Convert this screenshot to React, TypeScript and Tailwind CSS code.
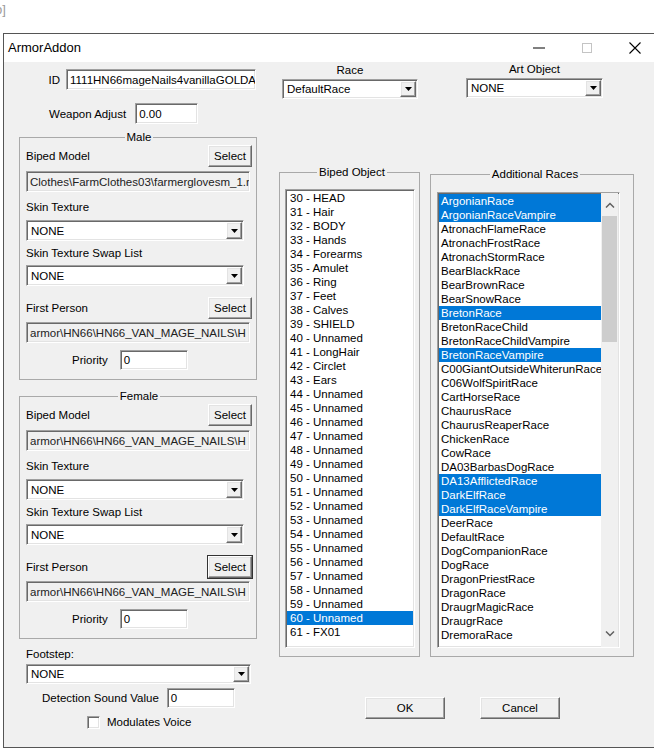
import React from 'react';

const sunken =
  'border border-t-[#a0a0a0] border-l-[#a0a0a0] border-r-white border-b-white shadow-[inset_1px_1px_0_#696969,inset_-1px_-1px_0_#e3e3e3]';
const raised =
  'border border-t-white border-l-white border-r-[#696969] border-b-[#696969] shadow-[inset_-1px_-1px_0_#a0a0a0,inset_1px_1px_0_#e3e3e3] bg-[#f0f0f0]';

const bipedSlots = [
  '30 - HEAD', '31 - Hair', '32 - BODY', '33 - Hands', '34 - Forearms', '35 - Amulet', '36 - Ring', '37 - Feet',
  '38 - Calves', '39 - SHIELD', '40 - Unnamed', '41 - LongHair', '42 - Circlet', '43 - Ears', '44 - Unnamed',
  '45 - Unnamed', '46 - Unnamed', '47 - Unnamed', '48 - Unnamed', '49 - Unnamed', '50 - Unnamed', '51 - Unnamed',
  '52 - Unnamed', '53 - Unnamed', '54 - Unnamed', '55 - Unnamed', '56 - Unnamed', '57 - Unnamed', '58 - Unnamed',
  '59 - Unnamed', '60 - Unnamed', '61 - FX01',
];

const races = [
  'ArgonianRace', 'ArgonianRaceVampire', 'AtronachFlameRace', 'AtronachFrostRace', 'AtronachStormRace',
  'BearBlackRace', 'BearBrownRace', 'BearSnowRace', 'BretonRace', 'BretonRaceChild', 'BretonRaceChildVampire',
  'BretonRaceVampire', 'C00GiantOutsideWhiterunRace', 'C06WolfSpiritRace', 'CartHorseRace', 'ChaurusRace',
  'ChaurusReaperRace', 'ChickenRace', 'CowRace', 'DA03BarbasDogRace', 'DA13AfflictedRace', 'DarkElfRace',
  'DarkElfRaceVampire', 'DeerRace', 'DefaultRace', 'DogCompanionRace', 'DogRace', 'DragonPriestRace',
  'DragonRace', 'DraugrMagicRace', 'DraugrRace', 'DremoraRace',
];
const selectedRaces = ['ArgonianRace', 'ArgonianRaceVampire', 'BretonRace', 'BretonRaceVampire', 'DA13AfflictedRace', 'DarkElfRace', 'DarkElfRaceVampire'];

function Arrow() {
  return (
    <svg width="7" height="4" viewBox="0 0 7 4">
      <path d="M0 0h7L3.5 4z" fill="#000" />
    </svg>
  );
}

function Combo({ value, className }: { value: string; className: string }) {
  return (
    <div className={`flex bg-white ${sunken} ${className}`}>
      <span className="flex-1 pl-[4px] flex items-center overflow-hidden whitespace-nowrap">{value}</span>
      <span className={`w-[16px] m-[1px] flex items-center justify-center ${raised}`}>
        <Arrow />
      </span>
    </div>
  );
}

function Edit({ value, className, gray }: { value: string; className: string; gray?: boolean }) {
  return (
    <div
      className={`flex items-center pl-[3px] overflow-hidden whitespace-nowrap ${sunken} ${
        gray ? 'bg-[#f0f0f0] text-[#222]' : 'bg-white'
      } ${className}`}
    >
      {value}
    </div>
  );
}

function Btn({ label, className, focused }: { label: string; className: string; focused?: boolean }) {
  return (
    <div className={`flex items-center justify-center ${raised} ${focused ? 'outline outline-1 outline-[#333]' : ''} ${className}`}>
      {label}
    </div>
  );
}

function Group({ title, className, children }: { title: string; className: string; children: React.ReactNode }) {
  return (
    <fieldset className={`border border-[#a9a9a9] ${className}`}>
      <legend className="mx-auto px-[2px] leading-[14px]">{title}</legend>
      {children}
    </fieldset>
  );
}

function GenderGroup({ title, className, biped, first, focused }: {
  title: string; className: string; biped: string; first: string; focused?: boolean;
}) {
  return (
    <Group title={title} className={`w-[238px] pl-[6px] pr-[4px] pt-[1px] pb-[9px] ${className}`}>
      <div className="flex flex-col">
        <div className="h-[22px] flex items-center justify-between">
          <span>Biped Model</span>
          <Btn label="Select" className="w-[44px] h-[22px]" />
        </div>
        <Edit value={biped} gray className="mt-[4px] w-[224px] h-[21px]" />
        <span className="mt-[8px] leading-[14px]">Skin Texture</span>
        <Combo value="NONE" className="mt-[6px] w-[218px] h-[21px]" />
        <span className="mt-[5px] leading-[14px]">Skin Texture Swap List</span>
        <Combo value="NONE" className="mt-[5px] w-[218px] h-[21px]" />
        <div className="mt-[11px] h-[22px] flex items-center justify-between">
          <span>First Person</span>
          <Btn label="Select" focused={focused} className="w-[44px] h-[22px]" />
        </div>
        <Edit value={first} gray className="mt-[3px] w-[224px] h-[21px]" />
        <div className="mt-[7px] pl-[46px] flex items-center gap-[12px]">
          <span>Priority</span>
          <Edit value="0" className="w-[68px] h-[20px]" />
        </div>
      </div>
    </Group>
  );
}

function Chevron({ up }: { up?: boolean }) {
  return (
    <svg width="10" height="6" viewBox="0 0 10 6">
      <path d={up ? 'M1 5.5L5 1.5L9 5.5' : 'M1 0.5L5 4.5L9 0.5'} fill="none" stroke="#606060" strokeWidth="1.5" />
    </svg>
  );
}

export default function App() {
  const firstPath = 'armor\\HN66\\HN66_VAN_MAGE_NAILS\\H';
  return (
    <div className="w-[654px] h-[750px] bg-white overflow-hidden font-['Liberation_Sans',Arial,sans-serif] text-[11.5px] text-black leading-[14px]">
      <div className="h-[33px] pt-[3px] overflow-hidden">
        <span className="-ml-[5px] text-[13px] text-[#9a9a9a]">o]</span>
      </div>
      <div className="ml-[3px] w-[660px] h-[715px] border border-[#555] flex flex-col">
        {/* title bar */}
        <div className="h-[28px] bg-white flex items-center">
          <span className="pl-[4px] text-[13px] flex-1">ArmorAddon</span>
          <div className="w-[48px] h-full flex items-center justify-center">
            <svg width="12" height="2" viewBox="0 0 12 2"><path d="M0 1h12" stroke="#000" strokeWidth="1" /></svg>
          </div>
          <div className="w-[48px] h-full flex items-center justify-center">
            <div className="w-[10px] h-[10px] border border-[#c4c4c4]" />
          </div>
          <div className="w-[48px] h-full flex items-center justify-center mr-[3px]">
            <svg width="12" height="12" viewBox="0 0 12 12">
              <path d="M0.5 0.5L11.5 11.5M11.5 0.5L0.5 11.5" stroke="#000" strokeWidth="1.1" />
            </svg>
          </div>
        </div>

        {/* dialog body */}
        <div className="flex-1 bg-[#f0f0f0] flex pl-[15px]">
          <div className="w-[238px] flex flex-col pt-[7px]">
            <div className="flex items-center justify-end gap-[6px] pr-[1px]">
              <span>ID</span>
              <Edit value="1111HN66mageNails4vanillaGOLDA" className="w-[190px] h-[21px]" />
            </div>
            <div className="mt-[13px] flex items-center pl-[30px] gap-[9px]">
              <span>Weapon Adjust</span>
              <Edit value="0.00" className="w-[63px] h-[21px]" />
            </div>
            <GenderGroup title="Male" className="mt-[6px]" biped={'Clothes\\FarmClothes03\\farmerglovesm_1.r'} first={firstPath} />
            <GenderGroup title="Female" className="mt-[9px]" biped={firstPath} first={firstPath} focused />
            <span className="mt-[8px] ml-[7px]">Footstep:</span>
            <Combo value="NONE" className="mt-[3px] ml-[7px] w-[225px] h-[20px]" />
            <div className="mt-[4px] ml-[23px] flex items-center gap-[8px]">
              <span>Detection Sound Value</span>
              <Edit value="0" className="w-[68px] h-[20px]" />
            </div>
            <div className="mt-[7px] ml-[68px] flex items-center gap-[7px]">
              <span className={`w-[13px] h-[13px] bg-white ${sunken}`} />
              <span>Modulates Voice</span>
            </div>
          </div>

          <div className="ml-[22px] flex flex-col">
            <div className="flex gap-[10px]">
              <div className="w-[141px] flex flex-col">
                <div className="ml-[3px] mt-[1px] w-[136px] flex flex-col items-center">
                  <span>Race</span>
                  <Combo value="DefaultRace" className="mt-[2px] w-[136px] h-[20px]" />
                </div>
                <Group title="Biped Object" className="mt-[66px] w-[141px] pl-[5px] pt-[10px] pb-[8px]">
                  <div className={`w-[130px] h-[459px] bg-white overflow-hidden pt-[1px] pl-[1px] pr-[1px] ${sunken}`}>
                    {bipedSlots.map((s) => (
                      <div
                        key={s}
                        className={`h-[14px] pl-[3px] whitespace-nowrap ${s === '60 - Unnamed' ? 'bg-[#0078d7] text-white' : ''}`}
                      >
                        {s}
                      </div>
                    ))}
                  </div>
                </Group>
              </div>

              <div className="w-[204px] flex flex-col">
                <div className="ml-[36px] w-[137px] flex flex-col items-center">
                  <span>Art Object</span>
                  <Combo value="NONE" className="mt-[2px] w-[137px] h-[20px]" />
                </div>
                <Group title="Additional Races" className="mt-[69px] w-[204px] pl-[6px] pt-[11px] pb-[8px]">
                  <div className={`w-[183px] h-[456px] bg-white overflow-hidden flex ${sunken}`}>
                    <div className="w-[163px] pt-[1px] pl-[1px] overflow-hidden">
                      {races.map((r) => (
                        <div
                          key={r}
                          className={`h-[14px] pl-[2px] whitespace-nowrap overflow-hidden ${selectedRaces.includes(r) ? 'bg-[#0078d7] text-white' : ''}`}
                        >
                          {r}
                        </div>
                      ))}
                    </div>
                    <div className="w-[17px] bg-[#f0f0f0] flex flex-col">
                      <div className="h-[23px] flex items-center justify-center">
                        <Chevron up />
                      </div>
                      <div className="mx-[1px] h-[126px] bg-[#cdcdcd]" />
                      <div className="mt-auto h-[26px] flex items-center justify-center">
                        <Chevron />
                      </div>
                    </div>
                  </div>
                </Group>
              </div>
            </div>
            <div className="mt-[40px] ml-[86px] flex gap-[35px]">
              <Btn label="OK" className="w-[80px] h-[22px]" />
              <Btn label="Cancel" className="w-[80px] h-[22px]" />
            </div>
          </div>
        </div>
      </div>
    </div>
  );
}
